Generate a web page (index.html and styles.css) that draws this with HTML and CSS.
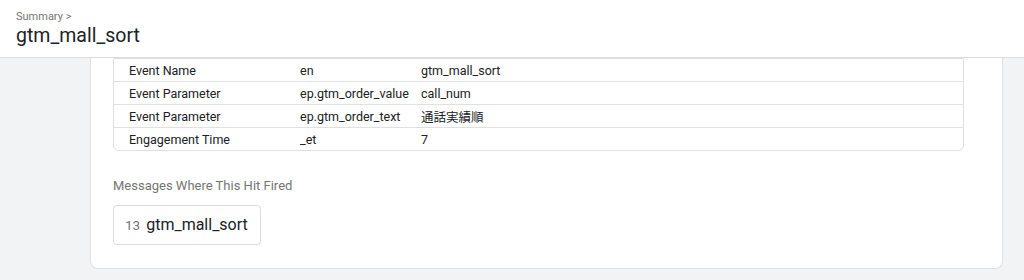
FILE: index.html
```html
<!DOCTYPE html>
<html lang="en">
<head>
  <meta charset="UTF-8" />
  <meta name="viewport" content="width=device-width, initial-scale=1.0" />
  <title>gtm_mall_sort - Summary</title>
  <link rel="stylesheet" href="styles.css">
</head>
<body>
  <header class="top">
    <div class="crumb">Summary &gt;</div>
    <div class="title">gtm_mall_sort</div>
  </header>
  <div class="scroller">
    <div class="card">
      <div class="params">
        <div class="row">
          <span>Event Name</span><span>en</span><span>gtm_mall_sort</span>
        </div>
        <div class="row">
          <span>Event Parameter</span><span>ep.gtm_order_value</span><span>call_num</span>
        </div>
        <div class="row">
          <span>Event Parameter</span><span>ep.gtm_order_text</span><span>通話実績順</span>
        </div>
        <div class="row">
          <span>Engagement Time</span><span>_et</span><span>7</span>
        </div>
      </div>

      <div class="section-title">Messages Where This Hit Fired</div>
      <div class="chip"><span class="num">13</span> gtm_mall_sort</div>
    </div>
  </div>
</body>
</html>
```

FILE: styles.css
```css
body {
  margin: 0;
  font-family: Roboto, "Noto Sans CJK JP", sans-serif;
  color: #202124;
  background: #f1f3f4;
}
.top {
  height: 58px;
  box-sizing: border-box;
  background: #fff;
  border-bottom: 1px solid #dadce0;
  padding-left: 16px;
}
.crumb {
  padding-top: 10px;
  font-size: 11px;
  line-height: 14px;
  color: #757575;
}
.title {
  font-size: 19.5px;
  line-height: 24px;
}
.scroller {
  height: 222px;
  overflow: hidden;
}
.card {
  margin: -20px 21px 0 90px;
  padding: 20px 38px 23px 22px;
  background: #fff;
  border: 1px solid #e0e0e0;
  border-top: none;
  border-radius: 0 0 8px 8px;
}
.params {
  border: 1px solid #e0e0e0;
  border-radius: 0 0 6px 6px;
}
.row {
  display: grid;
  grid-template-columns: 171px 121px 1fr;
  height: 22px;
  align-items: center;
  font-size: 12.5px;
  border-bottom: 1px solid #e0e0e0;
}
.row:last-child {
  border-bottom: none;
}
.row span {
  padding-left: 15px;
  white-space: nowrap;
}
.section-title {
  margin-top: 25px;
  font-size: 13px;
  line-height: 20px;
  color: #757575;
}
.chip {
  display: inline-block;
  margin-top: 9px;
  height: 40px;
  line-height: 38px;
  box-sizing: border-box;
  padding: 0 12px 0 11px;
  border: 1px solid #dadce0;
  border-radius: 4px;
  font-size: 16px;
}
.chip .num {
  font-size: 13.5px;
  color: #757575;
  margin-right: 2px;
}
```
